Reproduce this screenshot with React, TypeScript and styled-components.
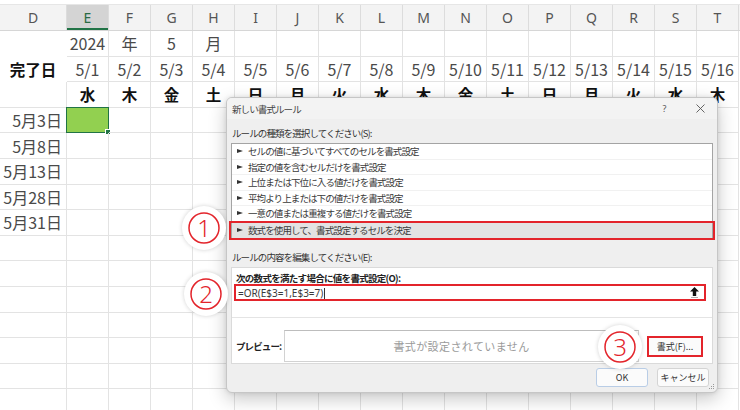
import React from 'react'
import styled, { createGlobalStyle } from 'styled-components'

const GlobalStyle = createGlobalStyle`
  html, body { margin: 0; padding: 0; background: #fff; }
  body { font-family: "Noto Sans CJK JP", "Noto Sans", sans-serif; }
`

const COLS = '67px repeat(16, 42px)'
const LETTERS = ['D', 'E', 'F', 'G', 'H', 'I', 'J', 'K', 'L', 'M', 'N', 'O', 'P', 'Q', 'R', 'S', 'T']
const DATES = Array.from({ length: 16 }, (_, i) => `5/${i + 1}`)
const DAYS = ['水', '木', '金', '土', '日', '月', '火', '水', '木', '金', '土', '日', '月', '火', '水', '木']
const DONE = ['5月3日', '5月8日', '5月13日', '5月28日', '5月31日']
const RULES = [
  'セルの値に基づいてすべてのセルを書式設定',
  '指定の値を含むセルだけを書式設定',
  '上位または下位に入る値だけを書式設定',
  '平均より上または下の値だけを書式設定',
  '一意の値または重複する値だけを書式設定',
  '数式を使用して、書式設定するセルを決定',
]

const Page = styled.div`
  position: relative;
  width: 740px;
  height: 410px;
  overflow: hidden;
  background: #fff;
`

const Sheet = styled.div`
  margin-top: 4px;
  border-top: 1px solid #e6e6e6;
`

const HeadRow = styled.div`
  display: grid;
  grid-template-columns: ${COLS};
  height: 26px;
  box-sizing: border-box;
  background: #f3f3f3;
  border-bottom: 1px solid #d6d6d6;
`

const HeadCell = styled.div<{ $active?: boolean }>`
  display: flex;
  align-items: center;
  justify-content: center;
  font-family: "Noto Sans", sans-serif;
  font-size: 14px;
  color: ${p => (p.$active ? '#2a6b45' : '#555')};
  background: ${p => (p.$active ? '#d4d4d4' : 'transparent')};
  border-right: 1px solid #dcdcdc;
  box-shadow: ${p => (p.$active ? 'inset 0 -2px 0 #217346' : 'none')};
`

const Row = styled.div`
  display: grid;
  grid-template-columns: ${COLS};
  height: 25.6px;
`

const Cell = styled.div<{ $align?: 'left' | 'center' | 'right'; $bold?: boolean; $dark?: boolean; $plain?: boolean; $fill?: string }>`
  position: relative;
  display: flex;
  align-items: center;
  justify-content: ${p => (p.$align === 'right' ? 'flex-end' : p.$align === 'left' ? 'flex-start' : 'center')};
  padding: 0 4px;
  box-sizing: border-box;
  white-space: nowrap;
  font-size: ${p => (p.$bold ? '15.5px' : '16px')};
  font-weight: ${p => (p.$bold ? 700 : 400)};
  color: ${p => (p.$dark ? '#111' : '#4a4a4a')};
  background: ${p => p.$fill || 'transparent'};
  border-right: 1px solid ${p => (p.$plain ? 'transparent' : '#e3e3e3')};
  border-bottom: 1px solid ${p => (p.$plain ? 'transparent' : '#e3e3e3')};
`

const Selection = styled.div`
  position: absolute;
  inset: -1px -1px -1px -1px;
  border: 1px solid #217346;
  &::after {
    content: '';
    position: absolute;
    right: -3px;
    bottom: -3px;
    width: 4px;
    height: 4px;
    background: #217346;
    border: 1px solid #fff;
  }
`

/* ---------- dialog ---------- */

const Dialog = styled.div`
  position: absolute;
  left: 226px;
  top: 97px;
  width: 492px;
  height: 296px;
  box-sizing: border-box;
  display: flex;
  flex-direction: column;
  background: #efefef;
  border: 1px solid #c6c6c6;
  border-radius: 6px;
  box-shadow: 0 6px 18px rgba(0, 0, 0, 0.22), 0 0 4px rgba(0, 0, 0, 0.1);
  font-family: "Noto Sans CJK JP", sans-serif;
  font-size: 9.5px;
  letter-spacing: -0.9px;
  color: #2e2e2e;
  overflow: hidden;
`

const TitleBar = styled.div`
  display: flex;
  align-items: center;
  height: 21px;
  padding-left: 5px;
  background: #f3f3f3;
`

const Title = styled.div`
  flex: 1;
  color: #444;
`

const Help = styled.div`
  width: 16px;
  margin-right: 14px;
  text-align: center;
  font-family: "Noto Sans", sans-serif;
  font-size: 9px;
  color: #555;
`

const Close = styled.div`
  width: 28px;
  margin-right: 3px;
  display: flex;
  justify-content: center;
`

const Body = styled.div`
  flex: 1;
  display: flex;
  flex-direction: column;
  padding: 0 4px;
`

const Label = styled.div<{ $top: number }>`
  height: 14px;
  line-height: 14px;
  margin-top: ${p => p.$top}px;
  margin-bottom: 3px;
  padding-left: 1px;
  color: #333;
`

const RuleList = styled.div`
  height: 97px;
  box-sizing: border-box;
  display: flex;
  flex-direction: column;
  background: #fff;
  border: 1px solid #a4a4a4;
`

const RuleItem = styled.div<{ $selected?: boolean }>`
  position: relative;
  display: flex;
  align-items: center;
  height: ${p => (p.$selected ? 'auto' : '15.5px')};
  flex: ${p => (p.$selected ? 1 : 'none')};
  box-sizing: border-box;
  padding-left: 5px;
  background: ${p => (p.$selected ? '#e3e3e3' : '#fff')};
  border-bottom: ${p => (p.$selected ? 'none' : '1px solid #f1f1f1')};
  color: #3a3a3a;
  &::after {
    content: '';
    display: ${p => (p.$selected ? 'block' : 'none')};
    position: absolute;
    inset: -1px -3px -1px -3px;
    border: 2px solid #e3242b;
  }
`

const Bullet = styled.span`
  width: 0;
  height: 0;
  margin-right: 5px;
  border-left: 6px solid #333;
  border-top: 2.5px solid transparent;
  border-bottom: 2.5px solid transparent;
`

const EditPanel = styled.div`
  height: 97px;
  box-sizing: border-box;
  display: flex;
  flex-direction: column;
  background: #fff;
  border: 1px solid #dadada;
`

const FormulaSection = styled.div`
  height: 47px;
  display: flex;
  flex-direction: column;
  padding: 4px 6px 0 2px;
  border-bottom: 1px solid #e4e4e4;
`

const BoldLabel = styled.div`
  height: 12px;
  line-height: 12px;
  padding-left: 2px;
  font-weight: 700;
  letter-spacing: -0.7px;
  color: #222;
`

const FormulaBox = styled.div`
  height: 17px;
  box-sizing: border-box;
  display: flex;
  align-items: center;
  justify-content: space-between;
  padding: 0 5px 0 2px;
  border: 2px solid #e3242b;
  font-family: "Noto Sans", sans-serif;
  font-size: 10px;
  letter-spacing: 0;
  color: #3a3a3a;
`

const Caret = styled.span`
  display: inline-block;
  width: 1px;
  height: 11px;
  margin-left: 1px;
  vertical-align: middle;
  background: #333;
`

const PreviewSection = styled.div`
  flex: 1;
  display: flex;
  align-items: center;
  padding: 12px 0 1px 4px;
`

const PreviewLabel = styled.div`
  width: 48px;
  font-weight: 700;
  color: #222;
`

const PreviewBox = styled.div`
  width: 355px;
  height: 32px;
  box-sizing: border-box;
  display: flex;
  align-items: center;
  justify-content: center;
  border: 1px solid #d2d2d2;
  border-top-color: #bdbdbd;
  font-size: 11px;
  letter-spacing: 0.4px;
  color: #9a9a9a;
`

const Button = styled.div<{ $width: number; $height: number; $tone?: 'red' | 'blue' }>`
  width: ${p => p.$width}px;
  height: ${p => p.$height}px;
  box-sizing: border-box;
  display: flex;
  align-items: center;
  justify-content: center;
  background: #fbfbfb;
  border: ${p => (p.$tone === 'red' ? '2px solid #e3242b' : p.$tone === 'blue' ? '1px solid #b9cde6' : '1px solid #d4d4d4')};
  border-radius: ${p => (p.$tone === 'red' ? 0 : 3)}px;
  font-size: 9px;
  letter-spacing: 0;
  color: #333;
`

const FormatSlot = styled.div`
  margin-left: 8px;
`

const Footer = styled.div`
  display: flex;
  justify-content: flex-end;
  gap: 9px;
  margin-top: 4px;
  padding-right: 4px;
`

const Grip = styled.svg`
  position: absolute;
  right: 2px;
  bottom: 2px;
`

/* ---------- callout numbers ---------- */

const Badge = styled.div<{ $x: number; $y: number }>`
  position: absolute;
  left: ${p => p.$x - 22}px;
  top: ${p => p.$y - 22}px;
  width: 44px;
  height: 44px;
  border-radius: 50%;
  background: #fff;
  box-shadow: 0 0 4px rgba(0, 0, 0, 0.18);
  display: flex;
  align-items: center;
  justify-content: center;
`

function Callout({ n, x, y }: { n: number; x: number; y: number }) {
  return (
    <Badge $x={x} $y={y}>
      <svg width="36" height="36" viewBox="0 0 36 36">
        <circle cx="18" cy="18" r="15" fill="none" stroke="#e3242b" strokeWidth="1.5" />
        <text x="18" y="26.5" textAnchor="middle" fontFamily="Noto Sans, sans-serif" fontWeight="300" fontSize="24" fill="#e3242b">
          {n}
        </text>
      </svg>
    </Badge>
  )
}

export default function App() {
  const blankRows = Array.from({ length: 7 })
  return (
    <>
      <GlobalStyle />
      <Page>
        <Sheet>
          <HeadRow>
            {LETTERS.map(l => (
              <HeadCell key={l} $active={l === 'E'}>{l}</HeadCell>
            ))}
          </HeadRow>

          <Row>
            <Cell $plain />
            {['2024', '年', '5', '月'].map((t, i) => (
              <Cell key={i}>{t}</Cell>
            ))}
            {Array.from({ length: 12 }).map((_, i) => (
              <Cell key={'b' + i} />
            ))}
          </Row>

          <Row>
            <Cell $plain $bold $dark>完了日</Cell>
            {DATES.map(d => (
              <Cell key={d}>{d}</Cell>
            ))}
          </Row>

          <Row>
            <Cell />
            {DAYS.map((d, i) => (
              <Cell key={i} $bold $dark>{d}</Cell>
            ))}
          </Row>

          {DONE.map((d, r) => (
            <Row key={d}>
              <Cell $align="right">{d}</Cell>
              {DAYS.map((_, i) =>
                r === 0 && i === 0 ? (
                  <Cell key={i} $fill="#92d050"><Selection /></Cell>
                ) : (
                  <Cell key={i} />
                )
              )}
            </Row>
          ))}

          {blankRows.map((_, r) => (
            <Row key={'e' + r}>
              <Cell />
              {DAYS.map((_, i) => (
                <Cell key={i} />
              ))}
            </Row>
          ))}
        </Sheet>

        <Dialog>
          <TitleBar>
            <Title>新しい書式ルール</Title>
            <Help>?</Help>
            <Close>
              <svg width="9" height="9" viewBox="0 0 9 9">
                <path d="M0.5 0.5 L8.5 8.5 M8.5 0.5 L0.5 8.5" stroke="#555" strokeWidth="0.9" />
              </svg>
            </Close>
          </TitleBar>

          <Body>
            <Label $top={7}>ルールの種類を選択してください(S):</Label>
            <RuleList>
              {RULES.map((r, i) => (
                <RuleItem key={r} $selected={i === RULES.length - 1}>
                  <Bullet />
                  {r}
                </RuleItem>
              ))}
            </RuleList>

            <Label $top={10}>ルールの内容を編集してください(E):</Label>
            <EditPanel>
              <FormulaSection>
                <BoldLabel>次の数式を満たす場合に値を書式設定(O):</BoldLabel>
                <FormulaBox>
                  <span>=OR(E$3=1,E$3=7)<Caret /></span>
                  <svg width="9" height="11" viewBox="0 0 9 11">
                    <path d="M4.5 0 L9 4.6 H6.2 V9 H2.8 V4.6 H0 Z" fill="#111" />
                    <path d="M1 10.5 H8" stroke="#999" strokeWidth="0.8" />
                  </svg>
                </FormulaBox>
              </FormulaSection>

              <PreviewSection>
                <PreviewLabel>プレビュー:</PreviewLabel>
                <PreviewBox>書式が設定されていません</PreviewBox>
                <FormatSlot>
                  <Button $width={56} $height={21} $tone="red">書式(F)...</Button>
                </FormatSlot>
              </PreviewSection>
            </EditPanel>

            <Footer>
              <Button $width={52} $height={19} $tone="blue">OK</Button>
              <Button $width={52} $height={19}>キャンセル</Button>
            </Footer>
          </Body>

          <Grip width="6" height="6" viewBox="0 0 6 6">
            <rect x="4" y="0" width="1" height="1" fill="#999" />
            <rect x="2" y="2" width="1" height="1" fill="#999" />
            <rect x="4" y="2" width="1" height="1" fill="#999" />
            <rect x="0" y="4" width="1" height="1" fill="#999" />
            <rect x="2" y="4" width="1" height="1" fill="#999" />
            <rect x="4" y="4" width="1" height="1" fill="#999" />
          </Grip>
        </Dialog>

        <Callout n={1} x={204} y={228} />
        <Callout n={2} x={206} y={294} />
        <Callout n={3} x={620} y={347} />
      </Page>
    </>
  )
}
